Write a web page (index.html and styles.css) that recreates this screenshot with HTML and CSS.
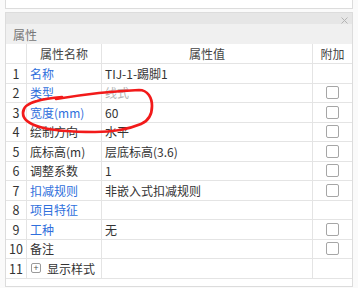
FILE: index.html
```html
<!DOCTYPE html>
<html lang="zh-CN">
<head>
    <meta charset="UTF-8">
    <title>属性</title>
    <link rel="stylesheet" href="styles.css">
</head>
<body>
    <!-- Upper panel (cut off) -->
    <div class="top-panel"></div>

    <!-- Property panel -->
    <div class="panel">
        <div class="panel-bar">
            <svg class="close-icon" width="7" height="7" viewBox="0 0 7 7">
                <path d="M0.5 0.5 L6.5 6.5 M6.5 0.5 L0.5 6.5" stroke="#b4b4b4" stroke-width="1" fill="none"/>
            </svg>
        </div>
        <div class="section-title">属性</div>

        <div class="grid">
            <div class="row head">
                <div class="cell"></div>
                <div class="cell center">属性名称</div>
                <div class="cell center">属性值</div>
                <div class="cell center">附加</div>
            </div>
            <div class="row">
                <div class="cell num">1</div>
                <div class="cell link">名称</div>
                <div class="cell">TIJ-1-踢脚1</div>
                <div class="cell"></div>
            </div>
            <div class="row">
                <div class="cell num">2</div>
                <div class="cell link">类型</div>
                <div class="cell muted">线式</div>
                <div class="cell center"><span class="check"></span></div>
            </div>
            <div class="row">
                <div class="cell num">3</div>
                <div class="cell link">宽度(mm)</div>
                <div class="cell">60</div>
                <div class="cell center"><span class="check"></span></div>
            </div>
            <div class="row">
                <div class="cell num">4</div>
                <div class="cell">绘制方向</div>
                <div class="cell">水平</div>
                <div class="cell center"><span class="check"></span></div>
            </div>
            <div class="row">
                <div class="cell num">5</div>
                <div class="cell">底标高(m)</div>
                <div class="cell">层底标高(3.6)</div>
                <div class="cell center"><span class="check"></span></div>
            </div>
            <div class="row">
                <div class="cell num">6</div>
                <div class="cell">调整系数</div>
                <div class="cell">1</div>
                <div class="cell center"><span class="check"></span></div>
            </div>
            <div class="row">
                <div class="cell num">7</div>
                <div class="cell link">扣减规则</div>
                <div class="cell">非嵌入式扣减规则</div>
                <div class="cell center"><span class="check"></span></div>
            </div>
            <div class="row">
                <div class="cell num">8</div>
                <div class="cell link">项目特征</div>
                <div class="cell"></div>
                <div class="cell"></div>
            </div>
            <div class="row">
                <div class="cell num">9</div>
                <div class="cell link">工种</div>
                <div class="cell">无</div>
                <div class="cell center"><span class="check"></span></div>
            </div>
            <div class="row">
                <div class="cell num">10</div>
                <div class="cell">备注</div>
                <div class="cell"></div>
                <div class="cell center"><span class="check"></span></div>
            </div>
            <div class="row">
                <div class="cell num">11</div>
                <div class="cell"><span class="expand">+</span>显示样式</div>
                <div class="cell"></div>
                <div class="cell"></div>
            </div>
        </div>
    </div>

    <!-- Hand-drawn annotation over the table -->
    <svg class="markup" width="358" height="288" viewBox="0 0 358 288">
        <path d="M56 99 C80 95 115 91 139 90 C148 90 152 98 152 106 C152 115 148 121 141 124 C129 129 111 132 95 132 C78 132 54 131 40 127 C29 124 23 119 23 113 C23 107 29 103 37 101 C44 99 51 98 62 97"
              stroke="#f21a1a" stroke-width="2.7" fill="none" stroke-linecap="round"/>
    </svg>
</body>
</html>
```

FILE: styles.css
```css
/* General Reset */
* {
    box-sizing: border-box;
    margin: 0;
    padding: 0;
}

body {
    font-family: "Noto Sans CJK SC", "Noto Sans", sans-serif;
    font-size: 12px;
    color: #333;
    background-color: #fafafa;
    width: 358px;
    height: 288px;
    overflow: hidden;
    position: relative;
}

/* Upper panel, only its bottom edge is visible */
.top-panel {
    margin-left: 5px;
    width: 348px;
    height: 9px;
    background-color: #fff;
    border: 1px solid #dcdcdc;
    border-top: none;
}

/* Property panel */
.panel {
    margin: 3px 0 0 5px;
    width: 348px;
    height: 275px;
    background-color: #fff;
    border: 1px solid #dcdcdc;
    display: flex;
    flex-direction: column;
}

.panel-bar {
    height: 11px;
    background-color: #e6e6e6;
    display: flex;
    justify-content: flex-end;
    align-items: center;
    padding-right: 4px;
}

.close-icon {
    margin-top: 3px;
}

.section-title {
    height: 20px;
    background-color: #f0f0f0;
    color: #777;
    font-size: 12px;
    padding-left: 7px;
    display: flex;
    align-items: center;
}

/* Property grid */
.row {
    display: grid;
    grid-template-columns: 21px 75px 211px 39px;
    height: 19.5px;
    border-bottom: 1px solid #e4e4e4;
}

.row.head {
    height: 20px;
}

.cell {
    border-right: 1px solid #e4e4e4;
    display: flex;
    align-items: center;
    padding-left: 3px;
    white-space: nowrap;
    overflow: hidden;
}

.cell:last-child {
    border-right: none;
}

.head .cell {
    color: #444;
}

.center {
    justify-content: center;
    padding-left: 0;
}

.num {
    justify-content: center;
    padding-left: 0;
    font-size: 12.5px;
}

.link {
    color: #2f6fdc;
}

.muted {
    color: #b4b4b4;
}

.check {
    width: 13px;
    height: 13px;
    border: 1px solid #a6a6a6;
    border-radius: 2px;
    background-color: #fff;
}

.expand {
    width: 10px;
    height: 10px;
    border: 1px solid #9a9a9a;
    border-radius: 2px;
    font-size: 9px;
    line-height: 8px;
    text-align: center;
    color: #555;
    margin: 0 6px 0 1px;
}

/* Annotation overlay */
.markup {
    position: absolute;
    top: 0;
    left: 0;
    pointer-events: none;
}
```
